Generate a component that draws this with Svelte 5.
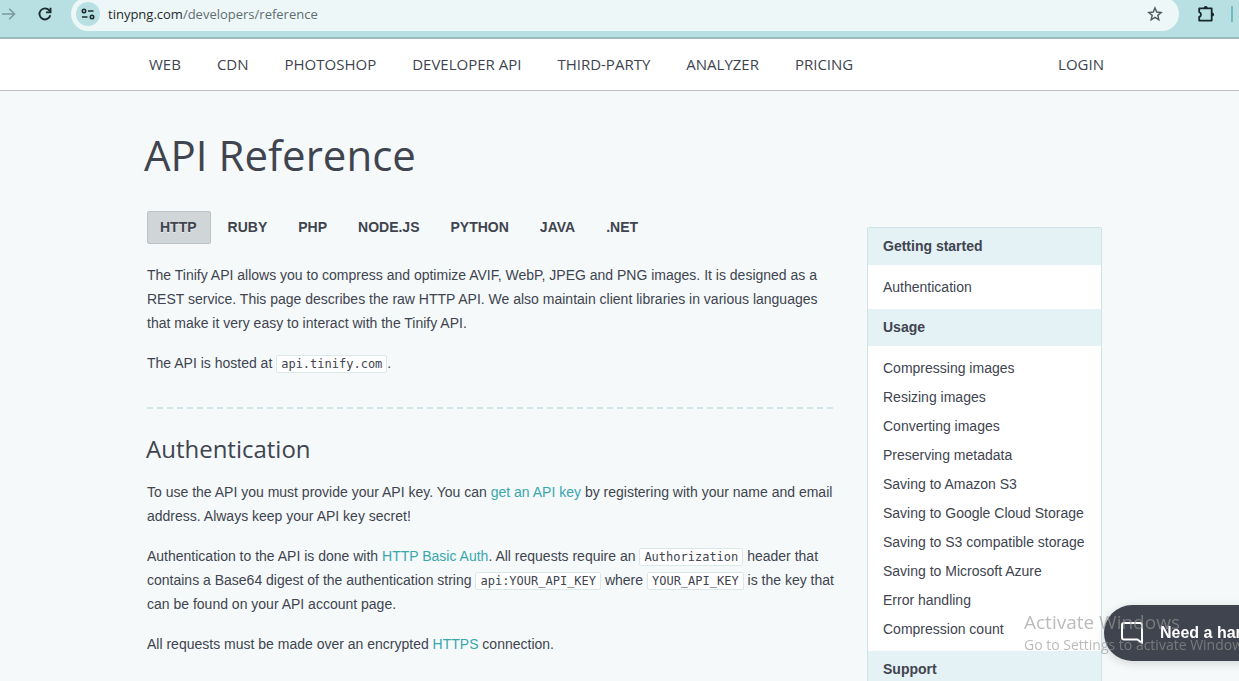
<script>
  const nav = ['Web', 'CDN', 'Photoshop', 'Developer API', 'Third-party', 'Analyzer', 'Pricing'];
  const languages = ['HTTP', 'Ruby', 'PHP', 'Node.js', 'Python', 'Java', '.NET'];
  const sections = [
    { title: 'Getting started', items: ['Authentication'] },
    {
      title: 'Usage',
      items: [
        'Compressing images', 'Resizing images', 'Converting images', 'Preserving metadata',
        'Saving to Amazon S3', 'Saving to Google Cloud Storage', 'Saving to S3 compatible storage',
        'Saving to Microsoft Azure', 'Error handling', 'Compression count'
      ]
    },
    { title: 'Support', items: [] }
  ];
  let active = $state('HTTP');
  let url = $state('tinypng.com/developers/reference');
  const host = $derived(url.split('/')[0]);
  const path = $derived(url.slice(host.length));
</script>

<div class="window">
  <div class="toolbar">
    <button class="tool forward" aria-label="Forward">
      <svg width="16" height="16" viewBox="0 0 16 16" fill="none" stroke="#7b9a9f" stroke-width="1.6"><path d="M0 8h12M7.200 2.700 12.500 8l-5.300 5.300" /></svg>
    </button>
    <button class="tool reload" aria-label="Reload">
      <svg width="16" height="16" viewBox="0 0 16 16" fill="none" stroke="#1c2b2e" stroke-width="1.900"><path d="M13.300 9.300A5.500 5.500 0 1 1 12.200 4.400L13.500 6" /><path d="M13.500 1.800v4.600H9" /></svg>
    </button>
    <div class="address">
      <button class="site" aria-label="Site information">
        <svg width="14" height="14" viewBox="0 0 14 14" fill="none" stroke="#1c2b2e" stroke-width="1.600"><circle cx="3" cy="4" r="1.700" /><path d="M7 4h5.500M1 10h5.500" /><circle cx="11" cy="10" r="1.700" /></svg>
      </button>
      <button class="url" aria-label="Address">{host}<span>{path}</span></button>
      <button class="tool star" aria-label="Bookmark this page">
        <svg width="16" height="16" viewBox="0 0 16 16" fill="none" stroke="#4c5b5e" stroke-width="1.400"><path d="m8 1.900 1.750 4.150 4.450.4-3.400 2.900 1.050 4.400L8 11.400l-3.850 2.350 1.050-4.400-3.400-2.900 4.450-.4z" /></svg>
      </button>
    </div>
    <button class="tool extensions" aria-label="Extensions">
      <svg width="18" height="18" viewBox="0 0 18 18"><path d="M2.200 3.400h12.500v12.200H2.200v-3.700a2.500 2.500 0 0 0 0-4.800z" fill="none" stroke="#17282b" stroke-width="1.800" stroke-linejoin="round" /><path d="M6.600 3a2.100 2.100 0 0 1 4.200 0zM15 7.400a2.100 2.100 0 0 1 0 4.200z" fill="#17282b" /></svg>
    </button>
    <i class="divider"></i>
  </div>

  <header>
    <nav aria-label="Main">
      {#each nav as item}<a href="#top">{item}</a>{/each}
      <a class="login" href="#login">Login</a>
    </nav>
  </header>

  <div class="page">
    <main>
      <h1>API Reference</h1>
      <div class="tabs">
        {#each languages as language}
          <button class:active={active === language} onclick={() => (active = language)}>{language}</button>
        {/each}
      </div>
      <p>The Tinify API allows you to compress and optimize AVIF, WebP, JPEG and PNG images. It is designed as a REST service. This page describes the raw HTTP API. We also maintain client libraries in various languages that make it very easy to interact with the Tinify API.</p>
      <p>The API is hosted at <code>api.tinify.com</code>.</p>
      <hr />
      <h2>Authentication</h2>
      <p>To use the API you must provide your API key. You can <a href="#key">get an API key</a> by registering with your name and email address. Always keep your API key secret!</p>
      <p>Authentication to the API is done with <a href="#basic">HTTP Basic Auth</a>. All requests require an <code>Authorization</code> header that contains a Base64 digest of the authentication string <code>api:YOUR_API_KEY</code> where <code>YOUR_API_KEY</code> is the key that can be found on your API account page.</p>
      <p>All requests must be made over an encrypted <a href="#https">HTTPS</a> connection.</p>
    </main>

    <aside>
      {#each sections as section}
        <h3>{section.title}</h3>
        {#if section.items.length}
          <ul>
            {#each section.items as item}<li><a href="#section">{item}</a></li>{/each}
          </ul>
        {/if}
      {/each}
    </aside>
  </div>

  <button class="chat">
    <svg width="24" height="24" viewBox="0 0 24 24" fill="none" stroke="#fff" stroke-width="2" stroke-linejoin="round"><path d="M4 2h16a2 2 0 0 1 2 2v18l-4.500-3.500H4a2 2 0 0 1-2-2V4a2 2 0 0 1 2-2z" /></svg>
    <span>Need a hand?</span>
  </button>
  <div class="watermark">
    <strong>Activate Windows</strong>
    <span>Go to Settings to activate Windows.</span>
  </div>
</div>

<style>
  :global(body) { margin: 0; background: #f5f9fa; }
  .window {
    height: 100vh;
    overflow: hidden;
    color: #40444f;
    font: 14px/24px "Liberation Sans", Arial, sans-serif;
  }
  button { padding: 0; border: 0; background: none; color: inherit; font: inherit; cursor: pointer; }
  a { color: inherit; text-decoration: none; }
  svg { display: block; flex: none; }

  .toolbar {
    box-sizing: border-box;
    height: 39px;
    padding-bottom: 9px;
    display: flex;
    align-items: center;
    background: #b8e0e3;
    border-bottom: 2px solid #9bb9bd;
  }
  .forward { margin-left: 2px; }
  .reload { margin-left: 19px; }
  .address {
    flex: 1;
    height: 34px;
    margin: 0 18px;
    display: flex;
    align-items: center;
    background: #edf7f8;
    border-radius: 17px;
  }
  .site {
    width: 24px;
    height: 24px;
    margin-left: 5px;
    display: grid;
    place-items: center;
    border-radius: 50%;
    background: #b8e0e3;
  }
  .url {
    flex: 1;
    margin-left: 8px;
    text-align: left;
    color: #1f2a2c;
    font: 13px/20px "Open Sans", sans-serif;
  }
  .url span { color: #5f6d70; }
  .star { margin-right: 16px; }
  .divider { width: 2px; height: 16px; margin: 0 6px 0 16px; background: #6fbcc0; }

  header { background: #fff; border-bottom: 1px solid #bcc4c6; padding-left: 14px; }
  nav {
    max-width: 955px;
    height: 49px;
    margin: 0 auto;
    padding-bottom: 2px;
    display: flex;
    align-items: center;
    gap: 36px;
    font: 15px/24px "Open Sans", sans-serif;
    text-transform: uppercase;
  }
  .login { margin-left: auto; }

  .page {
    max-width: 955px;
    margin: 0 auto;
    padding-left: 10px;
    display: grid;
    grid-template-columns: minmax(0, 1fr) 235px;
    gap: 31px;
    align-items: start;
  }
  h1, h2 { font-family: "Open Sans", sans-serif; font-weight: 400; }
  h1 { margin: 34px 0 26px -3px; font-size: 42px; line-height: 60px; }
  .tabs { display: flex; gap: 4px; margin-bottom: 19px; }
  .tabs button {
    box-sizing: border-box;
    height: 33px;
    padding: 0 13px 2px 12px;
    border: 1px solid transparent;
    border-radius: 2px;
    font-weight: bold;
    text-transform: uppercase;
  }
  .tabs .active { background: #d0d5d8; border-color: #bdc4c7; text-shadow: 0 1px #e8ebed; }
  p { margin: 0 0 16px; }
  p a { color: #3aa6ad; }
  code {
    padding: 1px 4px;
    border: 1px solid #dbe8ea;
    border-radius: 2px;
    background: #fff;
    font: 12px/14px "DejaVu Sans Mono", monospace;
  }
  hr {
    height: 2px;
    margin: 32px 0 24px;
    border: 0;
    background: repeating-linear-gradient(90deg, #cfe6e8 0 6px, transparent 6px 10px);
  }
  h2 { margin: 0 0 15px -1px; font-size: 24px; line-height: 32px; }

  aside { margin-top: 136px; border: 1px solid #cfe2e5; border-radius: 2px; background: #fff; }
  h3, ul { margin: 0; padding: 0 15px; }
  h3 { background: #e4f1f5; font-size: 14px; line-height: 37px; }
  ul { padding-top: 8px; padding-bottom: 7px; list-style: none; }
  li { line-height: 29px; }

  .chat {
    position: fixed;
    top: 605px;
    left: calc(100% - 135px);
    width: 190px;
    height: 56px;
    padding-left: 16px;
    display: flex;
    align-items: center;
    gap: 16px;
    border-radius: 28px;
    background: #40444f;
    box-shadow: 0 2px 10px rgb(0 0 0 / 15%);
    color: #fff;
    font-size: 16px;
    font-weight: bold;
    white-space: nowrap;
  }
  .watermark {
    position: fixed;
    top: 609px;
    left: calc(100% - 215px);
    color: rgb(150 150 150 / 65%);
    font: 14px/20px "Open Sans", sans-serif;
    white-space: nowrap;
    pointer-events: none;
  }
  .watermark strong { display: block; font-size: 19px; line-height: 26px; font-weight: 400; }
</style>
